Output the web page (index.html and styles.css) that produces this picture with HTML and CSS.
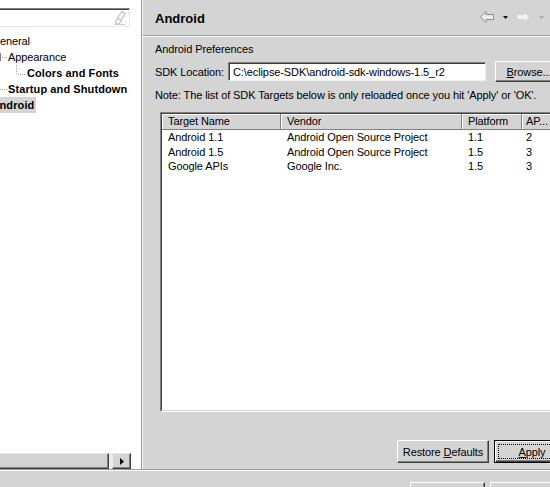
FILE: index.html
```html
<!DOCTYPE html>
<html lang="en">
<head>
    <meta charset="UTF-8">
    <title>Preferences - Android</title>
    <link rel="stylesheet" href="styles.css">
</head>
<body>
    <div class="dialog">
        <div class="main">
            <aside class="nav">
                <div class="filter">
                    <svg class="eraser" width="14" height="16" viewBox="0 0 14 16">
                        <path d="M8.5 1.5 L12.5 3.5 L6 14.5 L2 12.5 Z" fill="#f4f4f4" stroke="#b4b4b4"/>
                        <path d="M4.5 8.5 L8.5 10.5" stroke="#b4b4b4"/>
                        <path d="M1 14.5 H12" stroke="#c8c8c8"/>
                    </svg>
                </div>
                <ul class="tree">
                    <li class="node node-root">General</li>
                    <li class="node node-child">
                        <svg class="twig" width="8" height="16" viewBox="0 0 8 16">
                            <path d="M0.5 4 V12" stroke="#808080"/>
                            <path d="M2 8.5 H3 M4 8.5 H5 M6 8.5 H7" stroke="#a0a0a0"/>
                        </svg>Appearance
                    </li>
                    <li class="node node-grandchild bold">
                        <svg class="twig" width="12" height="16" viewBox="0 0 12 16">
                            <path d="M1.5 0 V1 M1.5 2 V3 M1.5 4 V5 M1.5 6 V7 M1.5 8 V9 M3 9.5 H4 M5 9.5 H6 M7 9.5 H8 M9 9.5 H10" stroke="#a0a0a0"/>
                        </svg>Colors and Fonts
                    </li>
                    <li class="node node-child bold">
                        <svg class="twig" width="8" height="16" viewBox="0 0 8 16">
                            <path d="M0 8.5 H1 M2 8.5 H3 M4 8.5 H5 M6 8.5 H7" stroke="#a0a0a0"/>
                        </svg>Startup and Shutdown
                    </li>
                    <li class="node node-root bold"><span class="selected">Android</span></li>
                </ul>
                <div class="hscroll">
                    <div class="hscroll-thumb"></div>
                    <div class="hscroll-track"></div>
                    <div class="hscroll-btn">
                        <svg width="4" height="7" viewBox="0 0 4 7"><path d="M0 0 L4 3.5 L0 7 Z" fill="#000"/></svg>
                    </div>
                </div>
            </aside>

            <section class="page">
                <header class="page-title">
                    <h1>Android</h1>
                    <div class="history">
                        <svg width="16" height="16" viewBox="0 0 16 16">
                            <path d="M1.5 8 L7 2.5 V5.5 H14.5 V10.5 H7 V13.5 Z" fill="#ececec" stroke="#8c8c8c"/>
                        </svg>
                        <svg width="5" height="3" viewBox="0 0 5 3"><path d="M0 0 H5 L2.5 3 Z" fill="#000"/></svg>
                        <svg width="16" height="16" viewBox="0 0 16 16">
                            <path d="M14.5 8 L9 2.5 V5.5 H1.5 V10.5 H9 V13.5 Z" fill="#f2f2f2" stroke="#d0d0d0"/>
                        </svg>
                        <svg width="5" height="3" viewBox="0 0 5 3"><path d="M0 0 H5 L2.5 3 Z" fill="#a8a8a8"/></svg>
                    </div>
                </header>

                <div class="page-body">
                    <p class="intro">Android Preferences</p>
                    <div class="sdk-row">
                        <label for="sdk">SDK Location:</label>
                        <input id="sdk" class="field" type="text" value="C:\eclipse-SDK\android-sdk-windows-1.5_r2">
                        <button class="btn btn-browse"><u>B</u>rowse...</button>
                    </div>
                    <p class="note">Note: The list of SDK Targets below is only reloaded once you hit 'Apply' or 'OK'.</p>

                    <div class="targets">
                        <div class="targets-inner">
                            <div class="grid grid-head">
                                <div class="cell">Target Name</div>
                                <div class="cell">Vendor</div>
                                <div class="cell">Platform</div>
                                <div class="cell cell-api">AP...</div>
                            </div>
                            <div class="grid grid-row">
                                <div class="cell">Android 1.1</div>
                                <div class="cell">Android Open Source Project</div>
                                <div class="cell">1.1</div>
                                <div class="cell cell-api">2</div>
                            </div>
                            <div class="grid grid-row">
                                <div class="cell">Android 1.5</div>
                                <div class="cell">Android Open Source Project</div>
                                <div class="cell">1.5</div>
                                <div class="cell cell-api">3</div>
                            </div>
                            <div class="grid grid-row">
                                <div class="cell">Google APIs</div>
                                <div class="cell">Google Inc.</div>
                                <div class="cell">1.5</div>
                                <div class="cell cell-api">3</div>
                            </div>
                        </div>
                    </div>

                    <div class="page-buttons">
                        <button class="btn btn-restore">Restore <u>D</u>efaults</button>
                        <button class="btn btn-default"><u>A</u>pply</button>
                    </div>
                </div>
            </section>
        </div>

        <footer class="dialog-buttons">
            <button class="btn btn-wide">OK</button>
            <button class="btn btn-wide">Cancel</button>
        </footer>
    </div>
</body>
</html>
```

FILE: styles.css
```css
* {
    margin: 0;
    padding: 0;
    box-sizing: border-box;
}

html, body {
    overflow: hidden;
}

body {
    background: #d4d4d4;
    font-family: 'Liberation Sans', Arial, sans-serif;
    font-size: 11px;
    letter-spacing: -0.1px;
    color: #000;
}

.dialog {
    width: 583px;
    height: 487px;
    display: flex;
    flex-direction: column;
}

.main {
    display: flex;
    height: 469px;
}

/* left: preference tree */

.nav {
    width: 142px;
    flex-shrink: 0;
    background: #fff;
    border-right: 1px solid #9a9a9a;
    display: flex;
    flex-direction: column;
    overflow: hidden;
}

.filter {
    height: 19px;
    margin: 8px 11px 0 -4px;
    border: 1px solid;
    border-color: #808080 #e8e8e8 #e8e8e8 #808080;
    box-shadow: inset 1px 1px #404040;
    display: flex;
    justify-content: flex-end;
    align-items: center;
    padding-right: 2px;
}

.tree {
    list-style: none;
    flex: 1;
    width: 140px;
    margin: 6px 0 0 -9px;
    overflow: hidden;
}

.node {
    height: 16px;
    line-height: 16px;
    display: flex;
    align-items: center;
    white-space: nowrap;
}

.node-root {
    padding-left: 0.5px;
}

.node-child {
    padding-left: 9px;
}

.node-grandchild {
    padding-left: 24px;
}

.twig {
    flex-shrink: 0;
}

.bold {
    font-weight: bold;
    letter-spacing: 0.1px;
}

.selected {
    background: #d4d4d4;
    margin-left: -2px;
    padding: 0 2px;
}

.hscroll {
    height: 16px;
    width: 131px;
    display: flex;
}

.hscroll-thumb {
    width: 109px;
    background: #d4d4d4;
    border-top: 1px solid #e8e8e8;
    border-right: 1px solid #404040;
    border-bottom: 1px solid #404040;
    box-shadow: inset -1px -1px #808080;
}

.hscroll-track {
    width: 3px;
    background: #ececec;
}

.hscroll-btn {
    flex: 1;
    background: #d4d4d4;
    border: 1px solid;
    border-color: #e8e8e8 #404040 #404040 #e8e8e8;
    box-shadow: inset -1px -1px #808080;
    display: flex;
    justify-content: center;
    align-items: center;
}

/* right: preference page */

.page {
    flex: 1;
    border-left: 1px solid #f4f4f4;
    display: flex;
    flex-direction: column;
}

.page-title {
    height: 36px;
    display: flex;
    align-items: flex-start;
    padding: 11px 0 0 12px;
    border-bottom: 1px solid #a0a0a0;
    box-shadow: 0 1px #fff;
}

.page-title h1 {
    font-size: 13px;
    line-height: 16px;
    font-weight: bold;
    letter-spacing: 0;
}

.history {
    margin: -2px 39px 0 auto;
    display: flex;
    align-items: center;
    height: 16px;
}

.history svg:nth-child(2) {
    margin: 0 7px 0 8px;
}

.history svg:nth-child(4) {
    margin-left: 8px;
}

.page-body {
    padding: 6px 12px 0 12px;
}

.intro {
    line-height: 14px;
}

.sdk-row {
    display: flex;
    align-items: center;
    height: 21px;
    margin-top: 5px;
}

.sdk-row label {
    flex: 0 0 73px;
    line-height: 14px;
    white-space: nowrap;
}

.field {
    width: 258px;
    height: 19px;
    font: inherit;
    letter-spacing: -0.1px;
    padding: 0 4px;
    background: #fff;
    border: 1px solid;
    border-color: #808080 #f0f0f0 #f0f0f0 #808080;
    box-shadow: inset 1px 1px #404040;
    outline: none;
    flex-shrink: 0;
}

.note {
    line-height: 14px;
    margin-top: 6px;
    white-space: nowrap;
}

/* target table */

.targets {
    height: 300px;
    margin: 10px 0 0 5px;
    border: 1px solid;
    border-color: #808080 #fff #fff #808080;
}

.targets-inner {
    height: 100%;
    background: #fff;
    border: 1px solid;
    border-color: #404040 #d4d4d4 #d4d4d4 #404040;
}

.grid {
    display: grid;
    grid-template-columns: 119px 181px 60px 1fr;
}

.grid-head {
    height: 16px;
}

.grid-head .cell {
    background: #d4d4d4;
    border-right: 1px solid #808080;
    border-bottom: 1px solid #808080;
    box-shadow: inset 1px 1px #fff;
    line-height: 15px;
}

.grid-row {
    height: 14.5px;
    line-height: 14.5px;
}

.cell {
    padding-left: 6px;
    white-space: nowrap;
    overflow: hidden;
}

.cell-api {
    padding-left: 4px;
}

/* buttons */

.btn {
    font: inherit;
    letter-spacing: -0.1px;
    color: #000;
    height: 23px;
    background: #d4d4d4;
    border: 1px solid;
    border-color: #fff #404040 #404040 #fff;
    box-shadow: inset -1px -1px #808080;
    flex-shrink: 0;
}

.btn-browse {
    width: 68px;
    height: 21px;
    margin-left: 9px;
}

.page-buttons {
    display: flex;
    justify-content: flex-end;
    gap: 5px;
    margin-top: 28px;
    padding-right: 1px;
}

.btn-restore {
    width: 92px;
}

.btn-default {
    width: 76px;
    border: 1px solid #000;
    box-shadow: inset 1px 1px #fff, inset -1px -1px #404040, inset -2px -2px #808080;
    outline: 1px dotted #000;
    outline-offset: -5px;
}

.dialog-buttons {
    flex: 1;
    border-top: 1px solid #9a9a9a;
    box-shadow: inset 0 1px #fff;
    display: flex;
    justify-content: flex-end;
    gap: 5px;
    padding: 12px 18px 0 0;
    overflow: hidden;
}

.btn-wide {
    width: 75px;
}
```
